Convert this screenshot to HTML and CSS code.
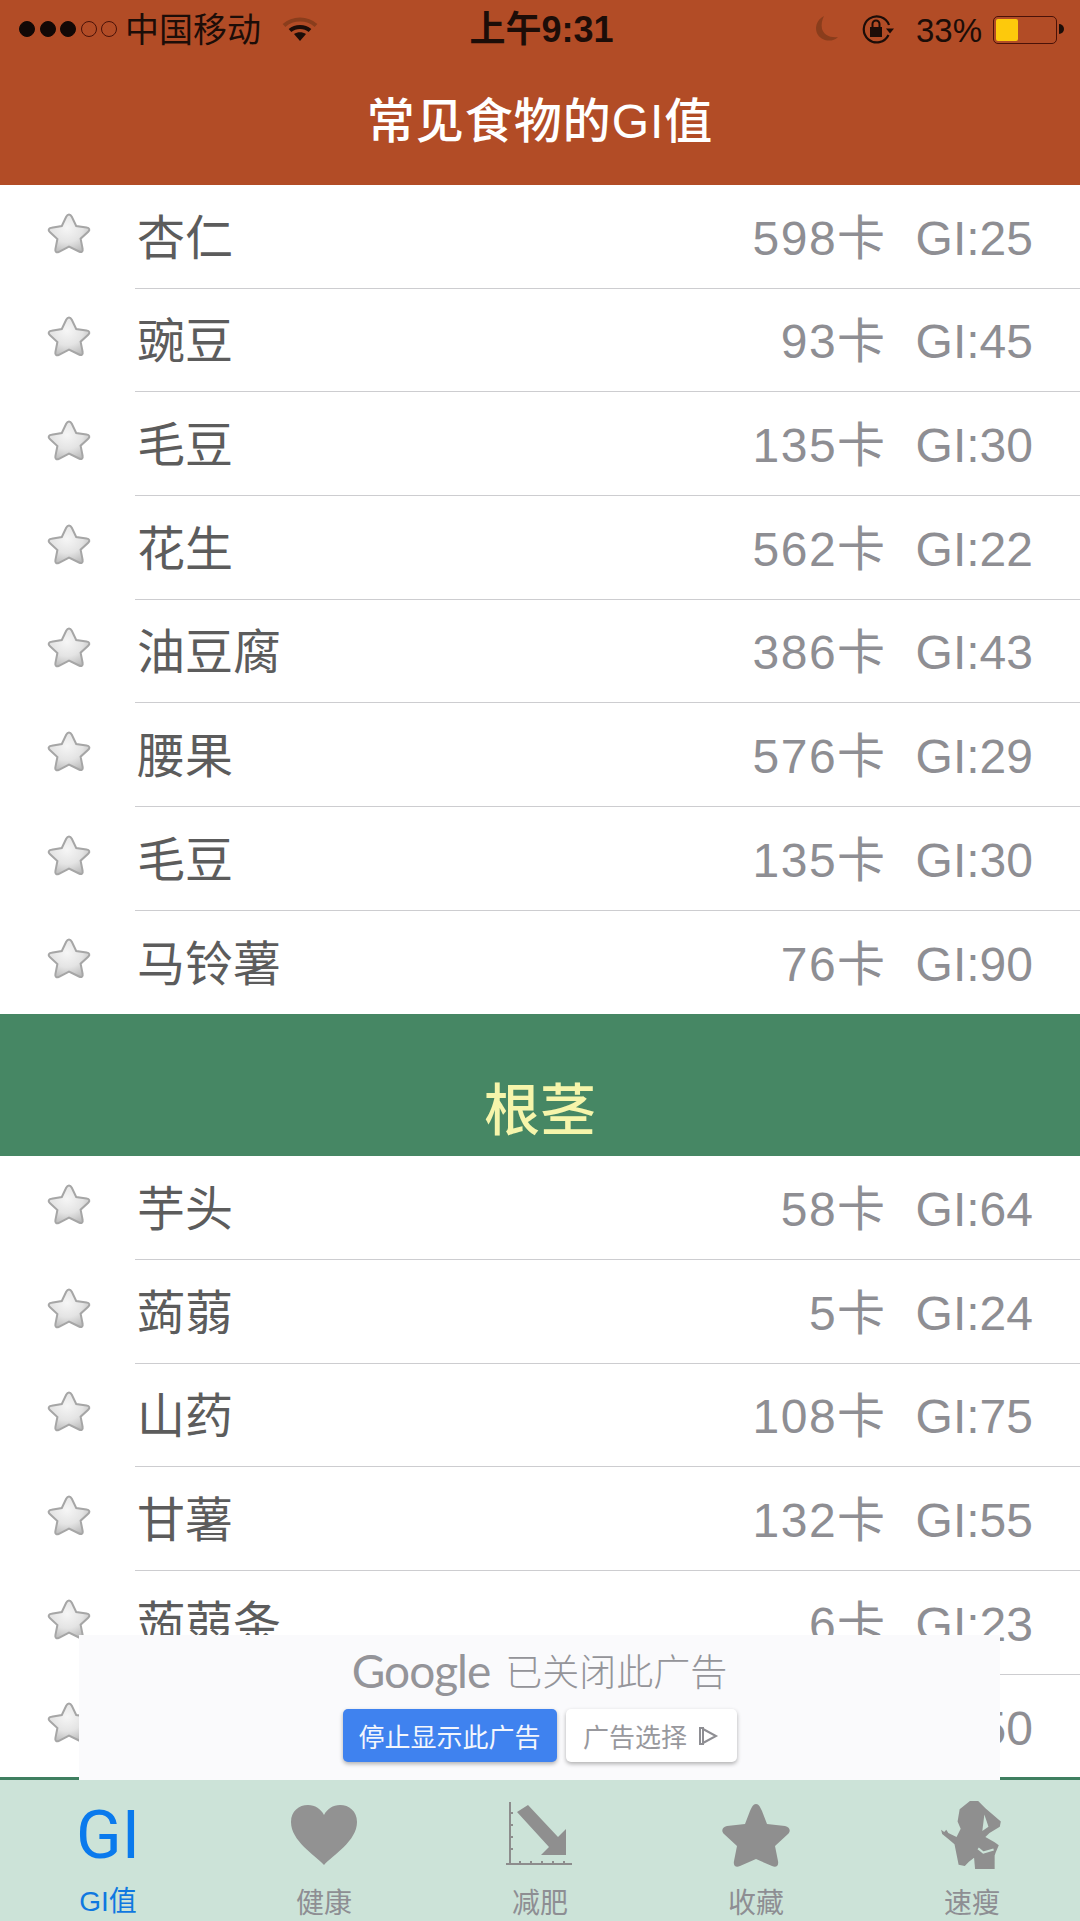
FILE: index.html
```html
<!DOCTYPE html>
<html lang="zh-CN">
<head>
<meta charset="utf-8">
<title>常见食物的GI值</title>
<link rel="stylesheet" href="styles.css">
</head>
<body>
<svg class="defs" width="0" height="0" aria-hidden="true">
  <defs>
    <radialGradient id="silver" cx="0.45" cy="0.35" r="0.7">
      <stop offset="0" stop-color="#f6f6f6"/>
      <stop offset="0.55" stop-color="#e4e4e4"/>
      <stop offset="1" stop-color="#b9b9b9"/>
    </radialGradient>
    <symbol id="star" viewBox="0 0 44 42">
      <path d="M22 1.500c1.500 0 2.200 1.100 2.800 2.300l4.400 9.200 10.300 1.400c3 .4 3.700 2.400 1.700 4.300l-7.600 7 2 10.100c.6 2.900-1.100 4-3.600 2.700L22 33.600l-10 5.200c-2.500 1.300-4.200.2-3.600-2.700l2-10.100-7.600-7c-2-1.900-1.300-3.900 1.700-4.300L14.800 13l4.400-9.200C19.800 2.600 20.500 1.500 22 1.500z" fill="url(#silver)" stroke="#a6a6a6" stroke-width="2"/>
    </symbol>
  </defs>
</svg>

<div class="app">
  <header class="top">
    <div class="status">
      <div class="status-left">
        <span class="signal"><i class="dot on"></i><i class="dot on"></i><i class="dot on"></i><i class="dot"></i><i class="dot"></i></span>
        <span class="carrier">中国移动</span>
        <svg class="wifi" viewBox="0 0 36 26">
          <path d="M2 9.500C11 1.500 25 1.500 34 9.500" fill="none" stroke="#8a3d1c" stroke-width="4"/>
          <path d="M8 14.500C13.500 9.800 22.500 9.800 28 14.500" fill="none" stroke="#1c0d08" stroke-width="4"/>
          <path d="M18 25l-6-7c3.500-2.500 8.500-2.500 12 0z" fill="#1c0d08"/>
        </svg>
      </div>
      <span class="clock">上午9:31</span>
      <div class="status-right">
        <svg class="moon" viewBox="0 0 26 28"><path d="M11 1C3 5 1 14 5 20c4 6 14 8 20 2-8 1-14-2-16-8-1-5 0-9 2-13z" fill="#8a3d1c"/></svg>
        <svg class="lock" viewBox="0 0 34 30">
          <path d="M27.500 21A13 13 0 1 1 28 11" fill="none" stroke="#1c0d08" stroke-width="2.200"/>
          <path d="M25 14.500h8l-4 5z" fill="#1c0d08"/>
          <rect x="9" y="13" width="12" height="10" fill="#1c0d08"/>
          <path d="M11.500 13V10a3.500 3.500 0 0 1 7 0v3" fill="none" stroke="#1c0d08" stroke-width="2"/>
        </svg>
        <span class="percent">33%</span>
        <span class="battery"><span class="battery-fill"></span></span>
        <span class="battery-nub"></span>
      </div>
    </div>
    <h1 class="title">常见食物的GI值</h1>
  </header>

  <main class="list">
    <section class="group">
      <div class="row"><svg class="star"><use href="#star"/></svg><div class="row-body"><span class="name">杏仁</span><span class="cal">598卡</span><span class="gi">GI:25</span></div></div>
      <div class="row"><svg class="star"><use href="#star"/></svg><div class="row-body"><span class="name">豌豆</span><span class="cal">93卡</span><span class="gi">GI:45</span></div></div>
      <div class="row"><svg class="star"><use href="#star"/></svg><div class="row-body"><span class="name">毛豆</span><span class="cal">135卡</span><span class="gi">GI:30</span></div></div>
      <div class="row"><svg class="star"><use href="#star"/></svg><div class="row-body"><span class="name">花生</span><span class="cal">562卡</span><span class="gi">GI:22</span></div></div>
      <div class="row"><svg class="star"><use href="#star"/></svg><div class="row-body"><span class="name">油豆腐</span><span class="cal">386卡</span><span class="gi">GI:43</span></div></div>
      <div class="row"><svg class="star"><use href="#star"/></svg><div class="row-body"><span class="name">腰果</span><span class="cal">576卡</span><span class="gi">GI:29</span></div></div>
      <div class="row"><svg class="star"><use href="#star"/></svg><div class="row-body"><span class="name">毛豆</span><span class="cal">135卡</span><span class="gi">GI:30</span></div></div>
      <div class="row row-last"><svg class="star"><use href="#star"/></svg><div class="row-body"><span class="name">马铃薯</span><span class="cal">76卡</span><span class="gi">GI:90</span></div></div>
    </section>
    <h2 class="band">根茎</h2>
    <section class="group">
      <div class="row"><svg class="star"><use href="#star"/></svg><div class="row-body"><span class="name">芋头</span><span class="cal">58卡</span><span class="gi">GI:64</span></div></div>
      <div class="row"><svg class="star"><use href="#star"/></svg><div class="row-body"><span class="name">蒟蒻</span><span class="cal">5卡</span><span class="gi">GI:24</span></div></div>
      <div class="row"><svg class="star"><use href="#star"/></svg><div class="row-body"><span class="name">山药</span><span class="cal">108卡</span><span class="gi">GI:75</span></div></div>
      <div class="row"><svg class="star"><use href="#star"/></svg><div class="row-body"><span class="name">甘薯</span><span class="cal">132卡</span><span class="gi">GI:55</span></div></div>
      <div class="row"><svg class="star"><use href="#star"/></svg><div class="row-body"><span class="name">蒟蒻条</span><span class="cal">6卡</span><span class="gi">GI:23</span></div></div>
      <div class="row row-last"><svg class="star"><use href="#star"/></svg><div class="row-body"><span class="name"></span><span class="cal">90卡</span><span class="gi">GI:50</span></div></div>
    </section>
  </main>

  <aside class="ad">
    <div class="ad-line"><span class="ad-brand">Google</span><span class="ad-text">已关闭此广告</span></div>
    <div class="ad-actions">
      <span class="ad-btn ad-btn-primary">停止显示此广告</span>
      <span class="ad-btn ad-btn-plain">广告选择
        <svg class="ad-choice" viewBox="0 0 22 22"><path d="M3 3h3v16H3z" fill="none" stroke="#8e8e93" stroke-width="2"/><path d="M6 4l13 7-13 7" fill="none" stroke="#8e8e93" stroke-width="2"/></svg>
      </span>
    </div>
  </aside>

  <nav class="tabs">
    <div class="tab tab-active">
      <span class="tab-icon tab-gi">GI</span>
      <span class="tab-label">GI值</span>
    </div>
    <div class="tab">
      <svg class="tab-icon" viewBox="0 0 70 64"><path d="M35 62C26 52 2 38 2 19 2 8 10 2 19 2c7 0 13 4 16 10C38 6 44 2 51 2c9 0 17 6 17 17 0 19-24 33-33 43z" fill="#929292"/></svg>
      <span class="tab-label">健康</span>
    </div>
    <div class="tab">
      <svg class="tab-icon" viewBox="0 0 70 68">
        <path d="M5 1v63M1 63h66" fill="none" stroke="#8d8d8d" stroke-width="2"/>
        <path d="M5 12h3M5 24h3M5 36h3M5 48h3M15 60v3M26 60v3M37 60v3M48 60v3M59 60v3" fill="none" stroke="#8d8d8d" stroke-width="2"/>
        <path d="M12 11L23 4 53 36l8-8V54H36l8-8z" fill="#8f8f8f"/>
      </svg>
      <span class="tab-label">减肥</span>
    </div>
    <div class="tab">
      <svg class="tab-icon" viewBox="0 0 70 66"><path d="M35 2c3 0 4 3 6 7l5 13 18 2c5 1 6 5 3 8L54 44l3 15c1 5-2 7-6 5l-16-7-16 7c-4 2-7 0-6-5l3-15L3 32c-3-3-2-7 3-8l18-2 5-13c2-4 3-7 6-7z" fill="#8f8f8f"/></svg>
      <span class="tab-label">收藏</span>
    </div>
    <div class="tab">
      <svg class="tab-icon" viewBox="0 0 62 68">
        <path d="M29 1h8l7 7 15 13-1 5-10 6-4 4 9 5 4 3-3 7-1 3v13H34l-1-11-5 4-4 4-6-1-4-20-6-5-6-5-1-4 3 2 2-2 2 3 8 4 4-8-3-7 2-12z" fill="#8f8f8f"/>
        <path d="M43 14l4 12-6 4z" fill="#cce3d8"/>
        <path d="M37 47l5 4 10-3" fill="none" stroke="#cce3d8" stroke-width="2"/>
      </svg>
      <span class="tab-label">速瘦</span>
    </div>
  </nav>
</div>
</body>
</html>
```

FILE: styles.css
```css
* { box-sizing: border-box; margin: 0; padding: 0; }

html, body { width: 1080px; height: 1921px; overflow: hidden; background: #fff; }

body { font-family: "Liberation Sans", "Noto Sans CJK SC", sans-serif; }

.defs { display: block; height: 0; }

.app {
  position: relative;
  display: flex;
  flex-direction: column;
  width: 1080px;
  height: 1921px;
  overflow: hidden;
}

/* Header */
.top { flex: none; height: 185px; background: #b24c26; }

.status {
  display: flex;
  align-items: center;
  height: 58px;
  color: #1c0d08;
}

.status-left, .status-right { display: flex; align-items: center; flex: 1 1 0; }

.status-left { padding-left: 19px; }

.status-right { justify-content: flex-end; padding-right: 16px; }

.signal { display: flex; align-items: center; gap: 4.500px; }

.dot {
  display: block;
  width: 16px;
  height: 16px;
  border-radius: 50%;
  border: 1.500px solid #4a1208;
}

.dot.on { background: #120806; border-color: #120806; }

.carrier { margin: 2px 0 0 8px; font-size: 34px; line-height: 44px; }

.wifi { width: 36px; height: 26px; margin-left: 21px; }

.clock { flex: none; margin-top: 1px; font-size: 36px; font-weight: 700; line-height: 44px; }

.moon { width: 26px; height: 28px; margin-right: 22px; }

.lock { width: 34px; height: 30px; margin-right: 21px; }

.percent { font-size: 33px; line-height: 40px; margin: 4px 11px 0 0; }

.battery {
  display: block;
  width: 64px;
  height: 28px;
  margin-top: 2px;
  padding: 2px;
  border: 1.500px solid #4a1208;
  border-radius: 5px;
}

.battery-fill { display: block; width: 22px; height: 100%; background: #fdc90c; border-radius: 2px; }

.battery-nub {
  display: block;
  width: 5px;
  height: 10px;
  margin-left: 2px;
  background: #1c0d08;
  border-radius: 0 5px 5px 0;
}

.title {
  margin-top: 22px;
  color: #fff;
  font-size: 48px;
  font-weight: 500;
  line-height: 84px;
  letter-spacing: 1px;
  text-align: center;
}

/* List */
.list { flex: 1 1 0; min-height: 0; overflow: hidden; }

.row { display: flex; align-items: center; height: 103.670px; background: #fff; }

.star { flex: none; width: 44px; height: 42px; margin: 0 44px 6px 47px; }

.row-body {
  display: flex;
  flex: 1 1 0;
  align-items: center;
  align-self: stretch;
  padding: 5px 47px 0 2px;
  border-bottom: 1.500px solid #cdcdd0;
  font-size: 48px;
  line-height: 60px;
  color: #8e8e93;
}

.row-last .row-body { border-bottom: 0; }

.name { flex: 1 1 0; color: #5c5c5c; }

.cal { letter-spacing: 1.500px; }

.gi { margin-left: 29px; }

.band {
  height: 142px;
  padding-top: 53px;
  background: #468764;
  color: #f6f5ab;
  font-size: 56px;
  font-weight: 500;
  line-height: 88px;
  text-align: center;
}

/* Ad overlay */
.ad {
  position: absolute;
  left: 79px;
  top: 1635px;
  display: flex;
  flex-direction: column;
  align-items: center;
  width: 921px;
  height: 145px;
  background: #fafafc;
}

.ad-line { display: flex; align-items: center; height: 70px; margin-bottom: 4px; color: #949499; }

.ad-brand { font-family: "Lato", sans-serif; font-size: 46px; letter-spacing: -1px; margin-right: 15px; }

.ad-text { font-size: 37px; font-weight: 300; }

.ad-actions { display: flex; gap: 9px; }

.ad-btn {
  display: flex;
  align-items: center;
  justify-content: center;
  height: 53px;
  font-size: 26px;
  border-radius: 5px;
  box-shadow: 0 2px 4px rgba(0, 0, 0, 0.3);
}

.ad-btn-primary { width: 214px; background: #3f82ef; color: #f2f6fd; }

.ad-btn-plain { width: 171px; gap: 10px; background: #fff; color: #98989d; }

.ad-choice { width: 22px; height: 22px; }

/* Tabs */
.tabs {
  flex: none;
  display: grid;
  grid-template-columns: repeat(5, 1fr);
  height: 144px;
  background: #cce3d8;
  border-top: 3px solid #3f7f60;
}

.tab { display: flex; flex-direction: column; align-items: center; color: #8e8e93; }

.tab-icon { display: block; width: 70px; height: 70px; margin-top: 20px; }

.tab-gi {
  font-family: "Roboto", sans-serif;
  margin-top: 17px;
  width: auto;
  height: 76px;
  font-size: 67px;
  font-weight: 400;
  line-height: 76px;
  color: #0a7aed;
}

.tab-label { font-size: 28px; line-height: 34px; margin-top: 17px; }

.tab-gi + .tab-label { margin-top: 12px; }

.tab-active .tab-label { color: #0f78e0; }
```
